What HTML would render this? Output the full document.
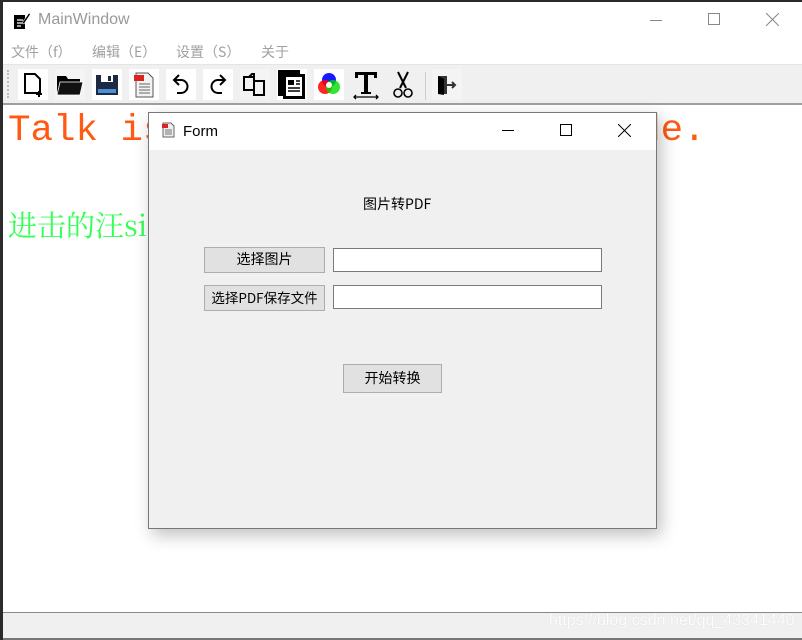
<!DOCTYPE html>
<html><head><meta charset="utf-8"><style>
*{margin:0;padding:0;box-sizing:border-box}
body{width:802px;height:640px;overflow:hidden;background:#2b2b2b;position:relative;font-family:"Liberation Sans","Noto Sans CJK SC",sans-serif}
.a{position:absolute}
#win{left:3px;top:2px;width:799px;height:638px;background:#fff}
.menu span{position:absolute;top:42px;font-size:14px;color:#a0a0a0;font-family:"Noto Sans CJK SC",sans-serif}
.ic{position:absolute;top:69px;width:30px;height:31px;background:#fff}
.btn{position:absolute;background:#e1e1e1;border:1px solid #adadad;font-family:"Noto Sans CJK SC",sans-serif;font-size:14px;color:#000;text-align:center;line-height:23px}
.inp{position:absolute;background:#fff;border:1px solid #7a7a7a}
</style></head><body>
<div class="a" id="win"></div>
<svg class="a" style="left:13px;top:10px" width="18" height="20" viewBox="0 0 18 20"><path d="M1 5h11v14H1z" fill="#000"/><path d="M4 10h6M4 13h6M4 16h4" stroke="#fff" stroke-width="1.2"/><path d="M9 13L16 3l1.5 1.2L11 14z" fill="#000" stroke="#fff" stroke-width=".6"/></svg>
<div class="a" style="left:38px;top:11px;font-size:16px;color:#999">MainWindow</div>
<div class="a" style="left:650px;top:20px;width:12px;height:1px;background:#888"></div>
<div class="a" style="left:708px;top:13px;width:12px;height:12px;border:1px solid #888"></div>
<svg class="a" style="left:766px;top:13px" width="13" height="13"><path d="M0 0L13 13M13 0L0 13" stroke="#888" stroke-width="1"/></svg>
<div class="menu">
<span style="left:11px">文件（f）</span><span style="left:92px">编辑（E）</span><span style="left:176px">设置（S）</span><span style="left:261px">关于</span>
</div>
<div class="a" style="left:3px;top:64px;width:799px;height:41px;background:#f0f0f0;border-top:1px solid #e5e5e5;border-bottom:2px solid #a0a0a0"></div>
<div class="a" style="left:7px;top:70px;width:2px;height:28px;border-left:2px dotted #bbb"></div>
<div class="ic" style="left:18px"><svg width="30" height="31"><path d="M7 5h10l5 5v14H7z" fill="none" stroke="#000" stroke-width="2"/><path d="M21 22v6M18 25h6" stroke="#000" stroke-width="2"/></svg></div>
<div class="ic" style="left:55px;background:#f4f4f4"><svg width="30" height="31"><path d="M2 7h9l2 3h12v16H2z" fill="#000"/><path d="M5 13h23l-3 13H2z" fill="#111" stroke="#fff" stroke-width=".8"/></svg></div>
<div class="ic" style="left:92px"><svg width="30" height="31"><rect x="4" y="6" width="22" height="20" fill="#1e2a44"/><rect x="9" y="6" width="12" height="7" fill="#fff"/><rect x="16" y="7" width="3" height="5" fill="#1e2a44"/><rect x="6" y="20" width="18" height="4" fill="#4a8fd8"/></svg></div>
<div class="ic" style="left:129px"><svg width="30" height="31"><path d="M7 4h12l5 5v19H7z" fill="#f2f2f2" stroke="#555"/><rect x="5" y="6" width="10" height="6" fill="#d22"/><path d="M10 15h11M10 18h11M10 21h11M10 24h11" stroke="#666"/></svg></div>
<div class="ic" style="left:166px"><svg width="30" height="31"><path d="M9 11h6a6 6 0 0 1 0 13h-4" fill="none" stroke="#000" stroke-width="2"/><path d="M13 6l-5 5 5 5" fill="none" stroke="#000" stroke-width="2"/></svg></div>
<div class="ic" style="left:203px"><svg width="30" height="31"><path d="M21 11h-6a6 6 0 0 0 0 13h4" fill="none" stroke="#000" stroke-width="2"/><path d="M17 6l5 5-5 5" fill="none" stroke="#000" stroke-width="2"/></svg></div>
<div class="ic" style="left:240px;background:#f4f4f4"><svg width="30" height="31"><path d="M4 8h10v13H4z M14 12h10v14H14z" fill="none" stroke="#000" stroke-width="2"/><path d="M9 8l3-3h2v7" fill="none" stroke="#000" stroke-width="2"/></svg></div>
<div class="ic" style="left:277px"><svg width="30" height="31"><rect x="1" y="1" width="22" height="26" fill="#000"/><rect x="6" y="5" width="22" height="25" fill="#000"/><rect x="9" y="8" width="16" height="19" fill="#fff"/><rect x="11" y="11" width="6" height="5" fill="#000"/><path d="M19 12h4M19 15h4M11 19h12M11 22h12" stroke="#000" stroke-width="1.6"/></svg></div>
<div class="ic" style="left:314px"><svg width="30" height="31"><circle cx="15" cy="11" r="7" fill="#00f" opacity=".9"/><circle cx="11" cy="18" r="7" fill="#f00" opacity=".85"/><circle cx="19" cy="18" r="7" fill="#0d0" opacity=".8"/><circle cx="15" cy="16" r="3" fill="#ffe"/></svg></div>
<div class="ic" style="left:351px;background:#f0f0f0"><svg width="30" height="31"><path d="M4 3h22v6h-3V6h-6v17h3v2h-10v-2h3V6H7v3H4z" fill="#000"/><path d="M3 28h24M5 26l-2 2 2 2M25 26l2 2-2 2" stroke="#000" fill="none" stroke-width="1.3"/></svg></div>
<div class="ic" style="left:388px;background:#f0f0f0"><svg width="30" height="31"><path d="M10 3l8 16M20 3l-8 16" stroke="#000" stroke-width="2"/><circle cx="10" cy="24" r="4" fill="none" stroke="#000" stroke-width="1.6"/><circle cx="20" cy="24" r="4" fill="none" stroke="#000" stroke-width="1.6"/></svg></div>
<div class="a" style="left:425px;top:72px;width:1px;height:28px;background:#ccc"></div>
<div class="ic" style="left:432px;background:#f4f4f4"><svg width="30" height="31"><path d="M6 7h9v18H6z" fill="#333"/><path d="M6 7l6 3v16l-6-1z" fill="#000"/><path d="M15 16h8M20 13l3 3-3 3" stroke="#333" stroke-width="2" fill="none"/></svg></div>
<div class="a" style="left:8px;top:110px;font-family:'Liberation Mono',monospace;font-size:37.5px;color:#ff5a14;white-space:pre">Talk is cheap.Show me the code.</div>
<div class="a" style="left:8px;top:204px;font-family:'Noto Serif CJK SC','Liberation Serif',serif;font-size:29px;color:#33ff55;white-space:pre">进击的汪sir</div>
<div class="a" style="left:3px;top:612px;width:799px;height:28px;background:#f0f0f0;border-top:1px solid #888;border-bottom:2px solid #777"></div>
<div class="a" style="left:549px;top:612px;font-size:16px;color:#fff;opacity:.9;text-shadow:0 0 1px #ccc">https://blog.csdn.net/qq_43341440</div>
<div class="a" style="left:148px;top:112px;width:509px;height:417px;background:#f0f0f0;border:1px solid #777;box-shadow:4px 6px 16px rgba(0,0,0,.25)">
<div class="a" style="left:0;top:0;width:507px;height:37px;background:#fff"></div>
<svg class="a" style="left:12px;top:9px" width="14" height="16"><path d="M2 1h8l3 3v11H2z" fill="#eee" stroke="#666"/><rect x="1" y="2" width="6" height="4" fill="#d22"/><path d="M4 8h7M4 10h7M4 12h7" stroke="#777"/></svg>
<div class="a" style="left:34px;top:10px;font-size:15px;color:#000">Form</div>
<div class="a" style="left:353px;top:17px;width:12px;height:1px;background:#000"></div>
<div class="a" style="left:411px;top:11px;width:12px;height:12px;border:1px solid #000"></div>
<svg class="a" style="left:469px;top:11px" width="13" height="13"><path d="M0 0L13 13M13 0L0 13" stroke="#000"/></svg>
<div class="a" style="left:214px;top:81px;font-family:'Noto Sans CJK SC',sans-serif;font-size:14px;color:#000">图片转PDF</div>
<div class="btn" style="left:55px;top:134px;width:121px;height:26px">选择图片</div>
<div class="inp" style="left:184px;top:135px;width:269px;height:24px"></div>
<div class="btn" style="left:55px;top:172px;width:121px;height:26px;font-size:13.5px">选择PDF保存文件</div>
<div class="inp" style="left:184px;top:172px;width:269px;height:24px"></div>
<div class="btn" style="left:194px;top:251px;width:99px;height:29px;line-height:26px">开始转换</div>
</div>
</body></html>
